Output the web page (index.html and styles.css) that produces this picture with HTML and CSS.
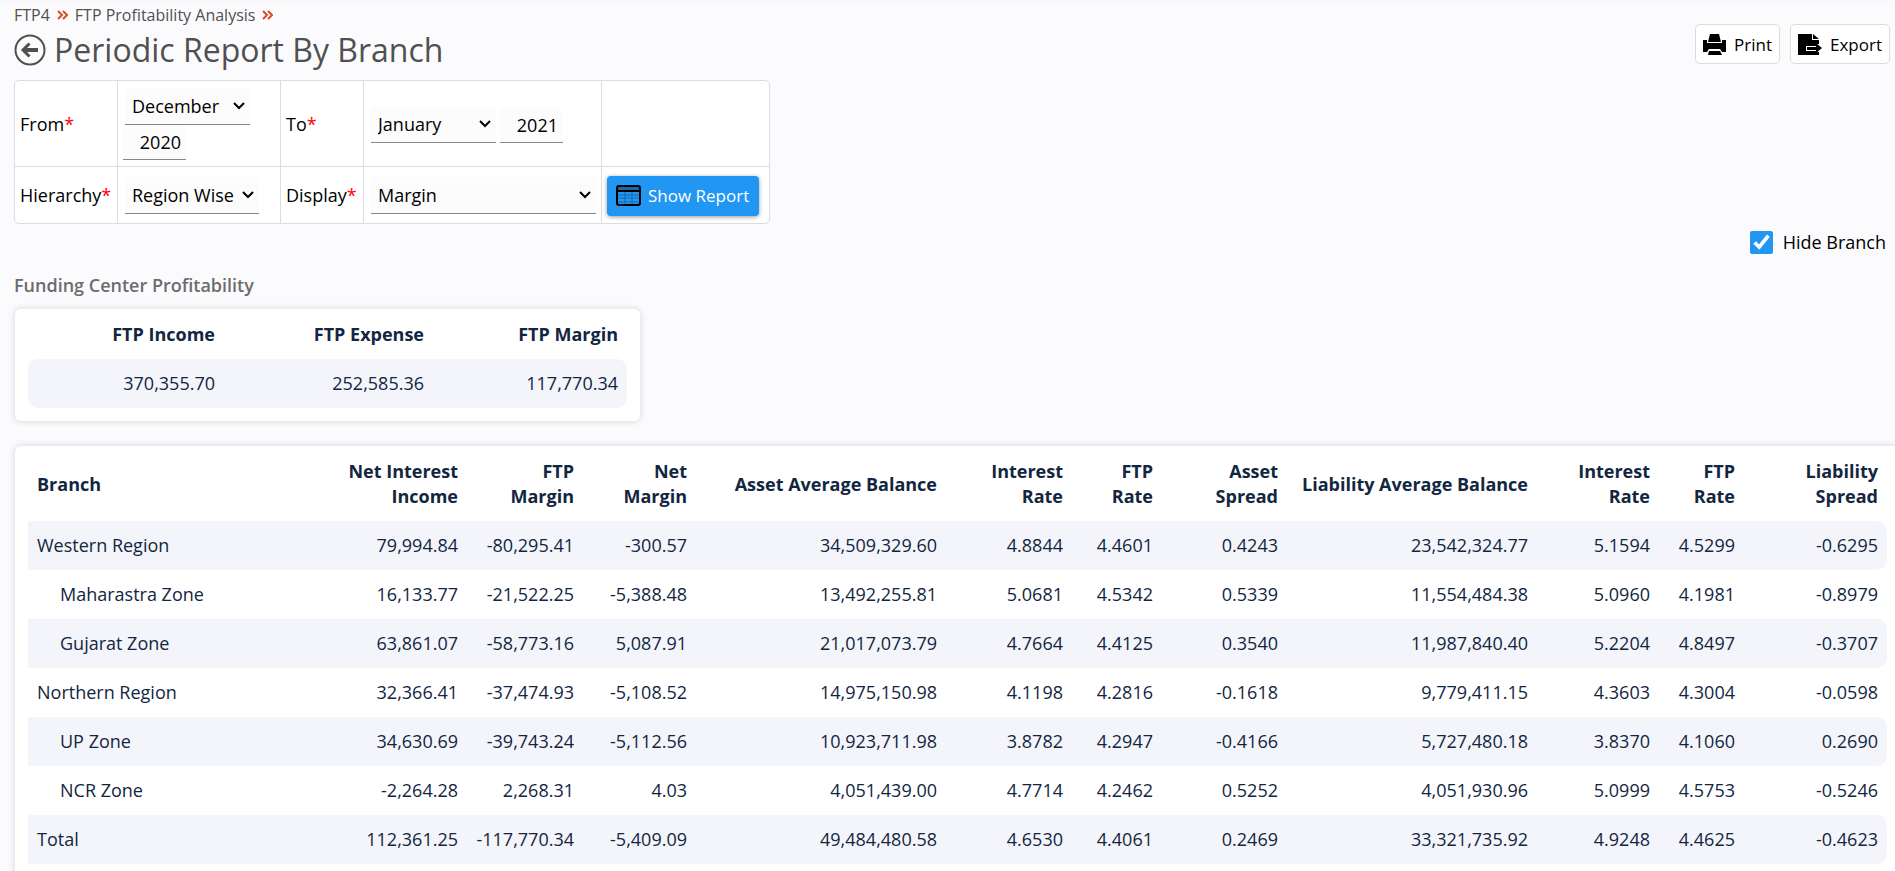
FILE: index.html
```html
<!DOCTYPE html>
<html lang="en">
  <head>
    <meta charset="UTF-8" />
    <meta name="viewport" content="width=device-width, initial-scale=1.0" />
    <title>Periodic Report By Branch</title>
    <link rel="stylesheet" href="styles.css">
  </head>

  <body>
    <div class="topLine"></div>
    <div class="page">
      <div class="pageHead">
        <div>
          <nav class="crumbs">
            <a href="#">FTP4</a>
            <svg class="chev" viewBox="0 0 11 10"><path d="M1 1l4 4-4 4M6 1l4 4-4 4" /></svg>
            <a href="#">FTP Profitability Analysis</a>
            <svg class="chev" viewBox="0 0 11 10"><path d="M1 1l4 4-4 4M6 1l4 4-4 4" /></svg>
          </nav>
          <div class="titleRow">
            <a href="#" class="back" aria-label="Back">
              <svg viewBox="0 0 32 32">
                <circle cx="16" cy="16" r="14.5" fill="none" stroke="#505050" stroke-width="2" />
                <path d="M24 16H10" fill="none" stroke="#505050" stroke-width="4" />
                <path d="M15.500 9.500L9 16l6.500 6.500" fill="none" stroke="#505050" stroke-width="3" />
              </svg>
            </a>
            <h1>Periodic Report By Branch</h1>
          </div>
        </div>
        <div class="tools">
          <button type="button" class="btn">
            <svg class="print" viewBox="0 0 23 21">
              <path d="M7 0h9l2 8H5z" />
              <path d="M0 6h4v3h15V6h4v12h-4l-2-3H6l-2 3H0z" />
              <path d="M6 17h11l2 4H5z" />
            </svg>
            Print
          </button>
          <button type="button" class="btn">
            <svg class="export" viewBox="0 0 24 21">
              <path d="M0 0h14v6h7v4h-3v2H8v5h10l3 1v3H0z" />
              <path d="M15 0l6 5h-6z" />
              <path d="M9 13h9V9l6 5-6 5v-3H9z" />
            </svg>
            Export
          </button>
        </div>
      </div>

      <form>
        <table class="filter">
          <colgroup>
            <col class="f1"><col class="f2"><col class="f3"><col class="f4"><col class="f5">
          </colgroup>
          <tr class="tall">
            <td><label for="fromMonth">From<span class="req">*</span></label></td>
            <td class="fields">
              <div class="stack">
                <select id="fromMonth" class="month"><option>December</option></select>
                <input type="text" class="year" value="2020" aria-label="From year" />
              </div>
            </td>
            <td><label for="toMonth">To<span class="req">*</span></label></td>
            <td class="fields">
              <div class="inline">
                <select id="toMonth" class="month"><option>January</option></select>
                <input type="text" class="year" value="2021" aria-label="To year" />
              </div>
            </td>
            <td></td>
          </tr>
          <tr>
            <td><label for="hierarchy">Hierarchy<span class="req">*</span></label></td>
            <td class="fields"><select id="hierarchy" class="hier"><option>Region Wise</option></select></td>
            <td><label for="display">Display<span class="req">*</span></label></td>
            <td class="fields"><select id="display" class="disp"><option>Margin</option></select></td>
            <td>
              <button type="button" class="show">
                <svg viewBox="0 0 25 21">
                  <rect x="1" y="1" width="23" height="5" fill="#1769aa" />
                  <path d="M2 10h21M2 13h21M2 17h21M9 6v14M16 6v14" stroke="#1769aa" fill="none" />
                  <path d="M1 6h23" stroke="#000" stroke-width="2" />
                  <rect x="1" y="1" width="23" height="19" rx="2" fill="none" stroke="#000" stroke-width="2" />
                </svg>
                Show Report
              </button>
            </td>
          </tr>
        </table>
      </form>

      <div class="hide">
        <input type="checkbox" id="hideBranch" checked />
        <label for="hideBranch">Hide Branch</label>
      </div>

      <h2>Funding Center Profitability</h2>
      <div class="card small">
        <table class="data round">
          <colgroup><col class="s1"><col class="s2"><col class="s3"></colgroup>
          <thead>
            <tr><th>FTP Income</th><th>FTP Expense</th><th>FTP Margin</th></tr>
          </thead>
          <tbody>
            <tr><td>370,355.70</td><td>252,585.36</td><td>117,770.34</td></tr>
          </tbody>
        </table>
      </div>

      <div class="card wide">
        <table class="data branch">
          <colgroup>
            <col class="name"><col class="nii"><col class="fm"><col class="nm">
            <col class="avg"><col class="air"><col class="afr"><col class="as">
            <col class="avg"><col class="lir"><col class="lfr"><col class="ls">
          </colgroup>
          <thead>
            <tr>
              <th>Branch</th>
              <th>Net Interest<br>Income</th>
              <th>FTP<br>Margin</th>
              <th>Net<br>Margin</th>
              <th>Asset Average Balance</th>
              <th>Interest<br>Rate</th>
              <th>FTP<br>Rate</th>
              <th>Asset<br>Spread</th>
              <th>Liability Average Balance</th>
              <th>Interest<br>Rate</th>
              <th>FTP<br>Rate</th>
              <th>Liability<br>Spread</th>
            </tr>
          </thead>
          <tbody>
            <tr><td>Western Region</td><td>79,994.84</td><td>-80,295.41</td><td>-300.57</td><td>34,509,329.60</td><td>4.8844</td><td>4.4601</td><td>0.4243</td><td>23,542,324.77</td><td>5.1594</td><td>4.5299</td><td>-0.6295</td></tr>
            <tr class="zone"><td>Maharastra Zone</td><td>16,133.77</td><td>-21,522.25</td><td>-5,388.48</td><td>13,492,255.81</td><td>5.0681</td><td>4.5342</td><td>0.5339</td><td>11,554,484.38</td><td>5.0960</td><td>4.1981</td><td>-0.8979</td></tr>
            <tr class="zone"><td>Gujarat Zone</td><td>63,861.07</td><td>-58,773.16</td><td>5,087.91</td><td>21,017,073.79</td><td>4.7664</td><td>4.4125</td><td>0.3540</td><td>11,987,840.40</td><td>5.2204</td><td>4.8497</td><td>-0.3707</td></tr>
            <tr><td>Northern Region</td><td>32,366.41</td><td>-37,474.93</td><td>-5,108.52</td><td>14,975,150.98</td><td>4.1198</td><td>4.2816</td><td>-0.1618</td><td>9,779,411.15</td><td>4.3603</td><td>4.3004</td><td>-0.0598</td></tr>
            <tr class="zone"><td>UP Zone</td><td>34,630.69</td><td>-39,743.24</td><td>-5,112.56</td><td>10,923,711.98</td><td>3.8782</td><td>4.2947</td><td>-0.4166</td><td>5,727,480.18</td><td>3.8370</td><td>4.1060</td><td>0.2690</td></tr>
            <tr class="zone"><td>NCR Zone</td><td>-2,264.28</td><td>2,268.31</td><td>4.03</td><td>4,051,439.00</td><td>4.7714</td><td>4.2462</td><td>0.5252</td><td>4,051,930.96</td><td>5.0999</td><td>4.5753</td><td>-0.5246</td></tr>
            <tr><td>Total</td><td>112,361.25</td><td>-117,770.34</td><td>-5,409.09</td><td>49,484,480.58</td><td>4.6530</td><td>4.4061</td><td>0.2469</td><td>33,321,735.92</td><td>4.9248</td><td>4.4625</td><td>-0.4623</td></tr>
          </tbody>
        </table>
      </div>
    </div>
  </body>
</html>
```

FILE: styles.css
```css
* {
  box-sizing: border-box;
}
body {
  margin: 0;
  background: #fbfbfe;
  font-family: "Open Sans", sans-serif;
  font-size: 18px;
  line-height: 25px;
  color: #000;
  overflow-x: hidden;
}
button, input, select {
  font-family: inherit;
  font-size: 18px;
  color: #000;
}
.topLine {
  height: 0;
  margin-right: 5px;
  box-shadow: 0 0 4px 1px rgba(0, 0, 0, 0.05);
}
.page {
  padding-left: 14px;
}

/* header */
.pageHead {
  display: flex;
  justify-content: space-between;
  align-items: flex-start;
  padding: 4px 5px 0 0;
}
.crumbs {
  display: flex;
  align-items: center;
  gap: 7px;
  height: 22px;
  font-size: 16px;
}
.crumbs a {
  color: #505050;
  text-decoration: none;
}
.chev {
  width: 11px;
  height: 10px;
  fill: none;
  stroke: #dd4b25;
  stroke-width: 2;
}
.titleRow {
  display: flex;
  align-items: center;
  gap: 8px;
  height: 48px;
  margin-bottom: 6px;
}
.back, .back svg {
  display: block;
  width: 32px;
  height: 32px;
}
h1 {
  margin: 0;
  font-size: 32px;
  line-height: 48px;
  font-weight: 400;
  color: #505050;
}
.tools {
  display: flex;
  gap: 10px;
  padding-top: 20px;
}
.btn {
  display: flex;
  align-items: center;
  gap: 8px;
  height: 40px;
  padding: 0 7px;
  border: 1px solid #ddd;
  border-radius: 5px;
  background: #fff;
  font-size: 17px;
}
.print {
  width: 23px;
  height: 21px;
}
.export {
  width: 24px;
  height: 21px;
}

/* filter */
.filter {
  border-collapse: separate;
  border-spacing: 0;
  table-layout: fixed;
  width: 756px;
  background: #fff;
  border: 1px solid #ddd;
  border-radius: 5px;
}
.f1 { width: 103px; }
.f2 { width: 163px; }
.f3 { width: 83px; }
.f4 { width: 238px; }
.filter td {
  height: 56px;
  padding: 1px 0 0 5px;
  white-space: nowrap;
  border-right: 1px solid #ddd;
}
.filter .tall td {
  height: 86px;
  border-bottom: 1px solid #ddd;
}
.filter td:last-child {
  border-right: 0;
}
.req {
  color: #f00;
}
.inline {
  display: flex;
  align-items: flex-end;
  gap: 4px;
}
.stack {
  display: flex;
  flex-direction: column;
  align-items: flex-start;
}
.stack .year {
  margin-left: -2px;
}
.filter .fields {
  padding-left: 7px;
}
select, .year {
  border: 0;
  border-bottom: 1px solid #888;
  border-radius: 4px 4px 0 0;
  background: #fcfcfc;
}
select {
  height: 37px;
  padding: 0 0 0 7px;
  appearance: none;
  background: #fcfcfc url("data:image/svg+xml,%3Csvg xmlns='http://www.w3.org/2000/svg' width='12' height='8'%3E%3Cpath d='M1 1l5 5 5-5' fill='none' stroke='%23000' stroke-width='2'/%3E%3C/svg%3E") no-repeat right 5px center;
}
.month { width: 125px; }
.year {
  width: 63px;
  height: 35px;
  padding: 0 5px;
  text-align: right;
}
.hier { width: 134px; }
.disp { width: 225px; }
.show {
  display: flex;
  align-items: center;
  gap: 7px;
  width: 152px;
  height: 40px;
  padding: 0 9px;
  border: 0;
  border-radius: 4px;
  background: #2196f3;
  color: #fff;
  font-size: 17px;
  font-weight: 500;
  white-space: nowrap;
  box-shadow: 0 1px 4px rgba(0, 0, 0, 0.4);
}
.show svg {
  flex: none;
  width: 25px;
  height: 21px;
}

.hide {
  display: flex;
  justify-content: flex-end;
  align-items: center;
  gap: 10px;
  padding: 6px 9px 0 0;
}
.hide input {
  width: 23px;
  height: 23px;
  margin: 0;
  accent-color: #2196f3;
}
h2 {
  margin: 18px 0 11px;
  font-size: 18px;
  line-height: 25px;
  font-weight: 600;
  color: #6c6c6c;
}

/* data tables */
.card {
  margin-left: 1px;
  padding: 13px;
  background: #fff;
  border-radius: 6px;
  box-shadow: 0 0 6px 1px rgba(0, 0, 0, 0.12);
}
.small {
  width: 625px;
}
.wide {
  margin-top: 25px;
  margin-right: -5px;
}
.data {
  width: 100%;
  table-layout: fixed;
  border-collapse: separate;
  border-spacing: 0;
  color: #12263f;
}
.data th {
  padding: 0 9px 12px;
  font-weight: 700;
  text-align: right;
  white-space: nowrap;
}
.data td {
  padding: 12px 9px;
  text-align: right;
}
.data tbody tr:nth-child(odd) td {
  background: #f4f5fb;
}
.data td:last-child {
  border-radius: 0 10px 10px 0;
}
.round td:first-child {
  border-radius: 10px 0 0 10px;
}
.branch th:first-child, .branch td:first-child {
  text-align: left;
}
.branch .zone td:first-child {
  padding-left: 32px;
}
.s1 { width: 196px; }
.s2 { width: 209px; }
.nii { width: 139px; }
.fm { width: 116px; }
.nm { width: 113px; }
.avg { width: 250px; }
.air { width: 126px; }
.afr { width: 90px; }
.as { width: 125px; }
.lir { width: 122px; }
.lfr { width: 85px; }
.ls { width: 143px; }
```
